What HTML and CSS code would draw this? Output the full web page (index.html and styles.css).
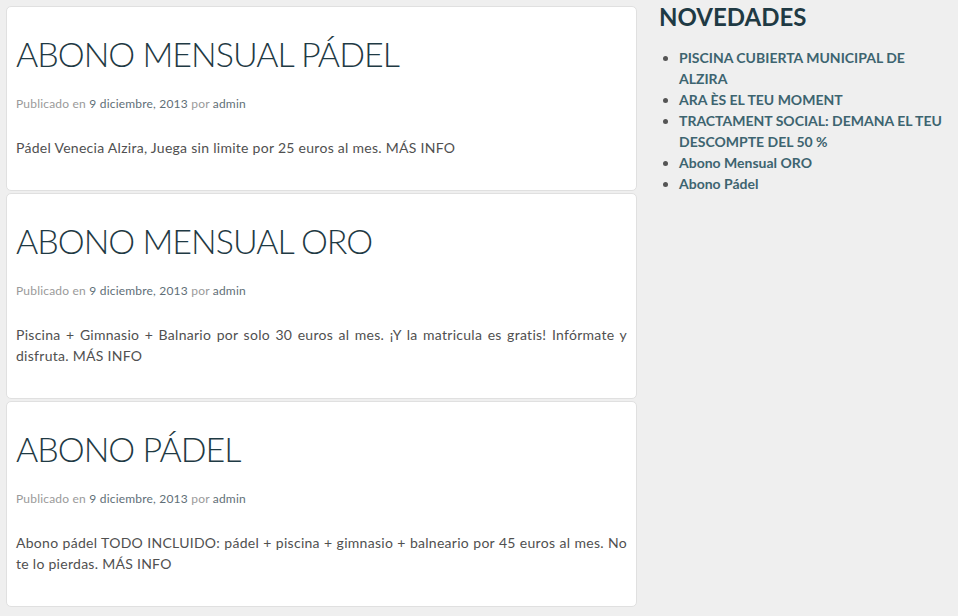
FILE: index.html
```html
<!DOCTYPE html>
<html lang="es">
<head>
<meta charset="utf-8">
<title>Novedades</title>
<link rel="stylesheet" href="styles.css">
</head>
<body>
<div class="page">
  <main class="posts">
    <article class="card">
      <h1 class="title">ABONO MENSUAL PÁDEL</h1>
      <div class="meta">Publicado en <a href="#">9 diciembre, 2013</a> por <a href="#">admin</a></div>
      <p class="excerpt">Pádel Venecia Alzira, Juega sin limite por 25 euros al mes. MÁS INFO</p>
    </article>
    <article class="card">
      <h1 class="title">ABONO MENSUAL ORO</h1>
      <div class="meta">Publicado en <a href="#">9 diciembre, 2013</a> por <a href="#">admin</a></div>
      <p class="excerpt">Piscina + Gimnasio + Balnario por solo 30 euros al mes. ¡Y la matricula es gratis! Infórmate y disfruta. MÁS INFO</p>
    </article>
    <article class="card">
      <h1 class="title">ABONO PÁDEL</h1>
      <div class="meta">Publicado en <a href="#">9 diciembre, 2013</a> por <a href="#">admin</a></div>
      <p class="excerpt">Abono pádel TODO INCLUIDO: pádel + piscina + gimnasio + balneario por 45 euros al mes. No te lo pierdas. MÁS INFO</p>
    </article>
  </main>
  <aside class="sidebar">
    <h2 class="widget-title">NOVEDADES</h2>
    <ul class="news">
      <li><a href="#">PISCINA CUBIERTA MUNICIPAL DE ALZIRA</a></li>
      <li><a href="#">ARA ÈS EL TEU MOMENT</a></li>
      <li><a href="#">TRACTAMENT SOCIAL: DEMANA EL TEU DESCOMPTE DEL 50 %</a></li>
      <li><a href="#">Abono Mensual ORO</a></li>
      <li><a href="#">Abono Pádel</a></li>
    </ul>
  </aside>
</div>
</body>
</html>
```
FILE: styles.css
```css
html, body {
  margin: 0;
  padding: 0;
  background: #efefef;
}
body {
  font-family: Lato, "Open Sans", "Liberation Sans", sans-serif;
  color: #4a4a4a;
}
a {
  text-decoration: none;
}
.page {
  display: flex;
  align-items: flex-start;
  width: 958px;
  height: 616px;
  overflow: hidden;
}
.posts {
  width: 631px;
  padding: 6px 0 0 6px;
  display: flex;
  flex-direction: column;
  gap: 2px;
  flex-shrink: 0;
}
.card {
  background: #fff;
  border: 1px solid #e0e0e0;
  border-radius: 5px;
  padding: 10px 9px 10px 9px;
}
.title {
  margin: 17px 0 0;
  font-size: 34px;
  line-height: 40px;
  font-weight: 300;
  letter-spacing: -1px;
  color: #1f3a44;
}
.meta {
  margin-top: 21px;
  font-size: 12px;
  line-height: 18px;
  letter-spacing: 0.2px;
  color: #9a9a9a;
}
.meta a {
  color: #5f6f78;
}
.excerpt {
  margin: 24px 0 22px;
  font-size: 14px;
  line-height: 21px;
  letter-spacing: 0.28px;
  text-align: justify;
  color: #505050;
}
.sidebar {
  flex: 1;
  padding: 0 12px 0 22px;
}
.widget-title {
  margin: 3px 0 0;
  font-size: 24px;
  line-height: 28px;
  font-weight: 700;
  color: #1f3a44;
}
.news {
  margin: 16px 0 0;
  padding-left: 20px;
  font-size: 14px;
  line-height: 21px;
  font-weight: 700;
  color: #555;
}
.news a {
  color: #3d6470;
}
```
